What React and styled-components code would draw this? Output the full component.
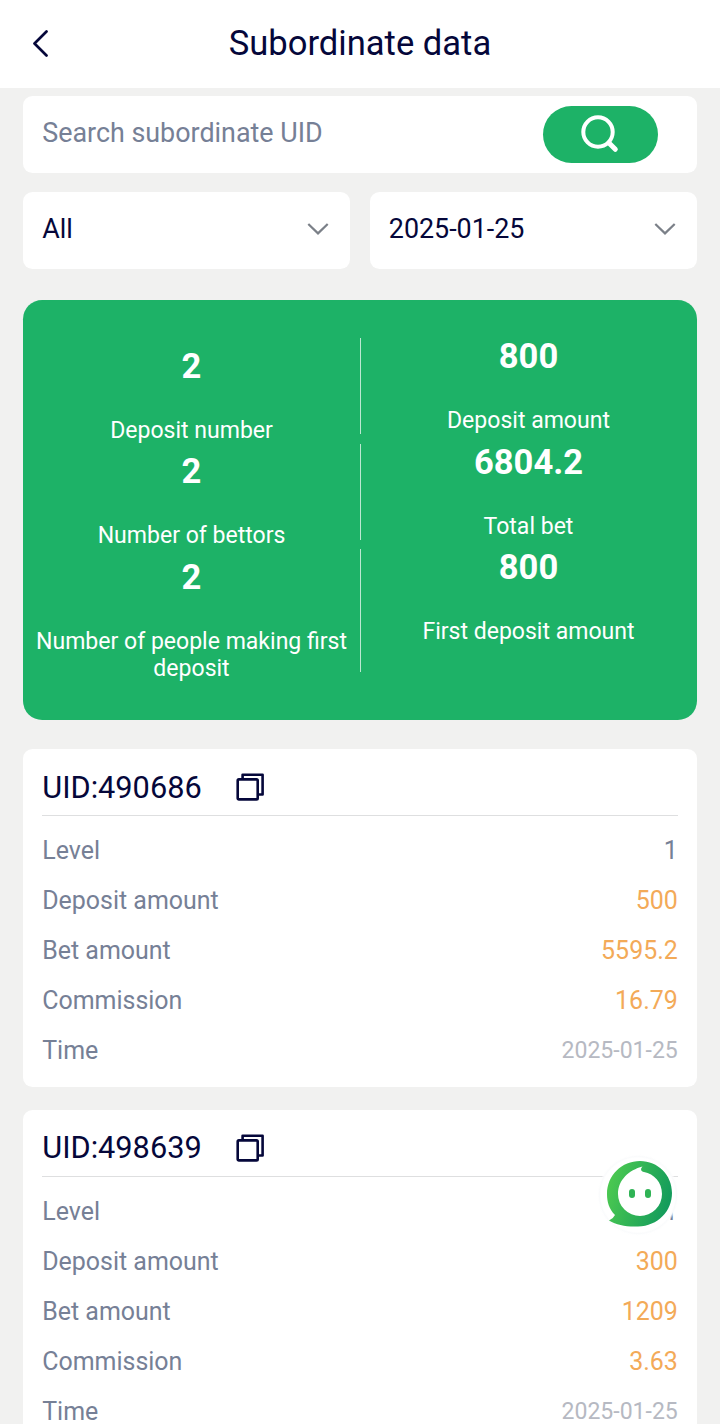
import { useState } from 'react'
import styled, { createGlobalStyle } from 'styled-components'

const GlobalStyle = createGlobalStyle`
  * { box-sizing: border-box; }
  body {
    margin: 0;
    background: #f1f1f0;
    font-family: Roboto, 'Liberation Sans', sans-serif;
    color: #05073a;
  }
`

const Page = styled.div`
  height: 100vh;
  overflow: hidden;
`

const NavBar = styled.header`
  display: grid;
  grid-template-columns: 80px 1fr 80px;
  align-items: center;
  height: 88px;
  padding-bottom: 2px;
  background: #fff;
`

const BackButton = styled.button`
  display: flex;
  padding: 0 0 0 32px;
  border: none;
  background: none;
  color: inherit;
`

const Title = styled.h1`
  margin: 0;
  font-size: 34.56px;
  font-weight: 400;
  text-align: center;
`

const Content = styled.main`
  padding: 8px 23.04px 0;
`

const SearchBox = styled.div`
  display: flex;
  align-items: center;
  height: 76.8px;
  padding: 0 39px 0 19.2px;
  border-radius: 9.6px;
  background: #fff;
`

const SearchInput = styled.input`
  flex: 1;
  min-width: 0;
  padding: 0 0 2px;
  border: none;
  outline: none;
  font-family: inherit;
  font-size: 26.88px;
  color: inherit;
  &::placeholder { color: #768096; opacity: 1; }
`

const SearchButton = styled.button`
  display: flex;
  align-items: center;
  justify-content: center;
  width: 115.2px;
  height: 57px;
  padding: 0;
  border: none;
  border-radius: 29px;
  background: #1db267;
`

const Filters = styled.div`
  display: grid;
  grid-template-columns: 1fr 1fr;
  gap: 19.2px;
  margin-top: 19.2px;
`

const Filter = styled.button`
  display: flex;
  align-items: center;
  justify-content: space-between;
  height: 76.8px;
  padding: 0 20px 2px 19.2px;
  border: none;
  border-radius: 9.6px;
  background: #fff;
  font-family: inherit;
  font-size: 26.88px;
  color: inherit;
`

const Summary = styled.section`
  display: grid;
  grid-template-columns: 1fr 1fr;
  margin-top: 31px;
  padding: 38.4px 0;
  border-radius: 19.2px;
  background: #1db267;
  color: #fff;
  text-align: center;
`

const Stat = styled.div`
  display: flex;
  flex-direction: column;
  gap: 32px;
  padding-top: ${p => p.$divided ? '9.6px' : 0};
  position: relative;
  &::after {
    content: ${p => p.$divided ? "''" : 'none'};
    position: absolute;
    top: 0;
    right: -1px;
    bottom: 9.6px;
    width: 1px;
    background: rgba(255, 255, 255, 0.7);
  }
`

const StatValue = styled.strong`
  font-size: 34.56px;
  font-weight: 700;
  line-height: 37px;
`

const StatLabel = styled.span`
  font-size: 23.04px;
  line-height: 27px;
`

const Card = styled.article`
  margin-top: ${p => p.$first ? '29px' : '22.6px'};
  padding: 0 19.2px 11.4px;
  border-radius: 9.6px;
  background: #fff;
`

const CardHeader = styled.div`
  display: flex;
  align-items: center;
  gap: 34px;
  height: 67px;
  margin-bottom: 9.6px;
  padding-top: 10px;
  border-bottom: 1px solid #dedfe0;
  font-size: 30.72px;
`

const CopyButton = styled.button`
  display: flex;
  padding: 0;
  border: none;
  background: none;
  color: inherit;
`

const Row = styled.div`
  display: flex;
  align-items: center;
  justify-content: space-between;
  height: 50px;
  font-size: 24.96px;
  color: #768096;
`

const tones = { plain: '#768096', amount: '#f3aa58', date: '#b6b9c2' }

const Value = styled.span`
  color: ${p => tones[p.$tone]};
  font-size: ${p => p.$tone === 'date' ? '23.04px' : 'inherit'};
`

const SupportButton = styled.button`
  position: fixed;
  left: 598px;
  top: 1152px;
  width: 82px;
  height: 84px;
  padding: 0;
  border: none;
  background: none;
`

function BackIcon() {
  return (
    <svg width="18" height="28" viewBox="0 0 18 28" fill="none" stroke="currentColor" strokeWidth="2.7" strokeLinecap="round" strokeLinejoin="round">
      <path d="M14.5 2.5 2.5 14.5l12 12" />
    </svg>
  )
}

function SearchIcon() {
  return (
    <svg width="40" height="40" viewBox="0 0 40 40" fill="none" stroke="#fff" strokeLinecap="round">
      <circle cx="18" cy="18" r="14.7" strokeWidth="4" />
      <path d="m29 29 6.3 6.3" strokeWidth="5" />
    </svg>
  )
}

function ChevronIcon() {
  return (
    <svg width="24" height="14" viewBox="0 0 24 14" fill="none" stroke="#7b8088" strokeWidth="2.2">
      <path d="m2.3 2 9.7 9.4L21.7 2" />
    </svg>
  )
}

function CopyIcon() {
  return (
    <svg width="28" height="28" viewBox="0 0 28 28" fill="none" stroke="currentColor" strokeWidth="2.6" strokeLinejoin="round">
      <rect x="1.7" y="6.4" width="20" height="20" rx="1.2" />
      <path d="M6.6 6.4V1.8h20v19.7h-4.9" />
    </svg>
  )
}

function SupportIcon() {
  return (
    <svg width="82" height="84" viewBox="0 0 82 84">
      <defs>
        <linearGradient id="bubble" x1="0" x2="1" y1="0.3" y2="0.6">
          <stop offset="0" stopColor="#4dca50" />
          <stop offset="1" stopColor="#129a5c" />
        </linearGradient>
        <radialGradient id="halo">
          <stop offset="0.9" stopColor="#fff" />
          <stop offset="0.94" stopColor="#fafbfc" />
          <stop offset="1" stopColor="#fff" stopOpacity="0" />
        </radialGradient>
      </defs>
      <circle cx="40" cy="43" r="41" fill="url(#halo)" />
      <path d="M42 9C60 9 74 23 74 41S60 74 40 74.500C28 75 19 73 11 68.500Q15 67 17 63C11 57 9 50 9 42 9 23 24 9 42 9Z" fill="url(#bubble)" />
      <path d="M44.500 14.500C42 17 43 19.500 46 20 56 22 64 30 64 42A22 22 0 0 1 20 42C20 28 31 18 44.500 14.500Z" fill="#fff" />
      <rect x="31" y="37" width="6" height="9" rx="3" fill="#2fb355" />
      <rect x="47" y="37" width="6" height="9" rx="3" fill="#2fb355" />
    </svg>
  )
}

const stats = [
  { label: 'Deposit number', value: '2' },
  { label: 'Deposit amount', value: '800' },
  { label: 'Number of bettors', value: '2' },
  { label: 'Total bet', value: '6804.2' },
  { label: 'Number of people making first deposit', value: '2' },
  { label: 'First deposit amount', value: '800' },
]

const subordinates = [
  { uid: '490686', level: 1, deposit: '500', bet: '5595.2', commission: '16.79', time: '2025-01-25' },
  { uid: '498639', level: 1, deposit: '300', bet: '1209', commission: '3.63', time: '2025-01-25' },
]

function SubordinateCard({ item, first }) {
  const rows = [
    ['Level', item.level, 'plain'],
    ['Deposit amount', item.deposit, 'amount'],
    ['Bet amount', item.bet, 'amount'],
    ['Commission', item.commission, 'amount'],
    ['Time', item.time, 'date'],
  ]
  return (
    <Card $first={first}>
      <CardHeader>
        <span>UID:{item.uid}</span>
        <CopyButton onClick={() => navigator.clipboard?.writeText(item.uid)}>
          <CopyIcon />
        </CopyButton>
      </CardHeader>
      {rows.map(([label, value, tone]) => (
        <Row key={label}>
          <span>{label}</span>
          <Value $tone={tone}>{value}</Value>
        </Row>
      ))}
    </Card>
  )
}

export default function App() {
  const [query, setQuery] = useState('')
  const visible = subordinates.filter(s => s.uid.includes(query.trim()))

  return (
    <Page>
      <GlobalStyle />
      <NavBar>
        <BackButton><BackIcon /></BackButton>
        <Title>Subordinate data</Title>
      </NavBar>

      <Content>
        <SearchBox>
          <SearchInput
            placeholder="Search subordinate UID"
            value={query}
            onChange={e => setQuery(e.target.value)}
          />
          <SearchButton><SearchIcon /></SearchButton>
        </SearchBox>

        <Filters>
          <Filter>All<ChevronIcon /></Filter>
          <Filter>2025-01-25<ChevronIcon /></Filter>
        </Filters>

        <Summary>
          {stats.map((s, i) => (
            <Stat key={s.label} $divided={i % 2 === 0}>
              <StatValue>{s.value}</StatValue>
              <StatLabel>{s.label}</StatLabel>
            </Stat>
          ))}
        </Summary>

        {visible.map((s, i) => (
          <SubordinateCard key={s.uid} item={s} first={i === 0} />
        ))}
      </Content>

      <SupportButton><SupportIcon /></SupportButton>
    </Page>
  )
}
